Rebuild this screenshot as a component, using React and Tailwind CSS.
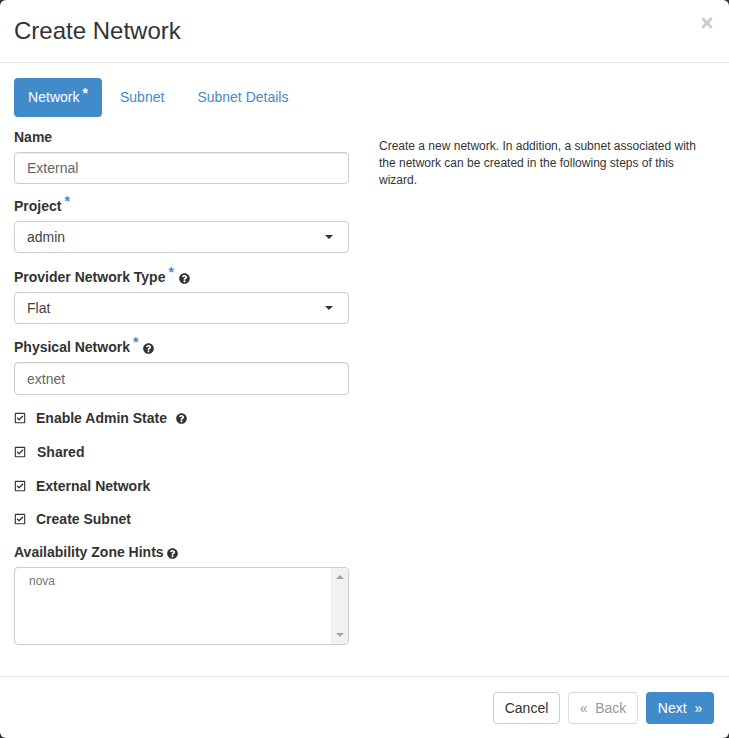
import { FaQuestionCircle, FaRegCheckSquare, FaTimes } from 'react-icons/fa';

function Req({ className = 'text-[#428bca]' }) {
  return <span className={`relative -top-[5px] ml-[3px] text-[14px] font-bold leading-none ${className}`}>*</span>;
}

function Help({ className = 'ml-[5px]' }) {
  return <FaQuestionCircle className={`inline-block text-[11px] text-[#333] ${className}`} />;
}

function Label({ children, className = '' }) {
  return <div className={`h-5 text-[14px] font-bold leading-5 text-[#333] whitespace-nowrap ${className}`}>{children}</div>;
}

function TextBox({ value, className = 'h-8' }) {
  return (
    <input
      readOnly
      value={value}
      className={`mt-[5px] block w-[335px] rounded border border-[#ccc] bg-white px-3 text-[14px] text-[#666] outline-none shadow-[inset_0_1px_1px_rgba(0,0,0,0.075)] ${className}`}
    />
  );
}

function Select({ value }) {
  return (
    <div className="mt-[5px] flex h-8 w-[335px] items-center justify-between rounded border border-[#ccc] bg-white pl-3 pr-[15px] text-[14px] text-[#444]">
      <span>{value}</span>
      <span className="h-0 w-0 border-x-[4px] border-t-[4px] border-x-transparent border-t-[#333]" />
    </div>
  );
}

function Check({ label, help, gap = 'ml-[10px]', className = '' }) {
  return (
    <div className={`flex h-5 items-center ${className}`}>
      <FaRegCheckSquare className="text-[12px] text-[#333]" />
      <span className={`${gap} text-[14px] font-bold text-[#333]`}>{label}</span>
      {help && <Help className="ml-[9px]" />}
    </div>
  );
}

export default function App() {
  return (
    <div className="h-[738px] w-[729px] overflow-hidden bg-[#333] font-['Liberation_Sans',Arial,sans-serif]">
      <div className="flex h-full flex-col rounded-md bg-white">
        <header className="relative h-[63px] shrink-0 border-b border-[#e5e5e5] pl-[14px] pt-[14px]">
          <h1 className="text-[24px] leading-[34px] text-[#333]">Create Network</h1>
          <button className="absolute right-[14px] top-[15px] text-[#ccc]"><FaTimes className="text-[16px]" /></button>
        </header>

        <main className="flex flex-1 px-[14px] pt-[15px]">
          <section className="w-[335px] shrink-0">
            <nav className="flex h-[39px] items-center text-[14px]">
              <span className="flex h-[39px] w-[88px] items-center justify-center rounded bg-[#428bca] font-normal text-white">
                Network<Req className="text-white" />
              </span>
              <span className="ml-[18px] text-[#428bca]">Subnet</span>
              <span className="ml-[33px] text-[#428bca]">Subnet Details</span>
            </nav>

            <Label className="mt-[10px]">Name</Label>
            <TextBox value="External" />

            <Label className="mt-[12px]">Project<Req /></Label>
            <Select value="admin" />

            <Label className="mt-[14px]">Provider Network Type<Req /><Help /></Label>
            <Select value="Flat" />

            <Label className="mt-[13px]">Physical Network<Req /><Help /></Label>
            <TextBox value="extnet" className="h-[33px]" />

            <Check className="mt-[13px]" label="Enable Admin State" help />
            <Check className="mt-[14px]" label="Shared" gap="ml-[11px]" />
            <Check className="mt-[14px]" label="External Network" />
            <Check className="mt-[13px]" label="Create Subnet" />

            <Label className="mt-[13px]">Availability Zone Hints<Help className="ml-[3px]" /></Label>
            <div className="mt-[5px] flex h-[78px] w-[335px] overflow-hidden rounded border border-[#ccc] bg-white">
              <div className="flex-1 pl-[14px] pt-[5px] text-[12px] leading-4 text-[#777]">nova</div>
              <div className="flex w-[17px] flex-col items-center justify-between bg-[#f1f1f1] py-[7px]">
                <span className="h-0 w-0 border-x-[4px] border-b-[4px] border-x-transparent border-b-[#a3a3a3]" />
                <span className="h-0 w-0 border-x-[4px] border-t-[4px] border-x-transparent border-t-[#a3a3a3]" />
              </div>
            </div>
          </section>

          <aside className="ml-[30px] w-[330px] pt-[60px] text-[12px] leading-[17px] text-[#333]">
            Create a new network. In addition, a subnet associated with the network can be created in the following steps of this wizard.
          </aside>
        </main>

        <footer className="flex h-[62px] shrink-0 items-start justify-end gap-2 border-t border-[#e5e5e5] pr-[15px] pt-[15px] text-[14px]">
          <button className="h-8 w-[67px] rounded border border-[#ccc] bg-white text-[#333]">Cancel</button>
          <button className="h-8 w-[70px] rounded border border-[#ddd] bg-white text-[#999]">«&nbsp; Back</button>
          <button className="h-8 w-[68px] rounded bg-[#428bca] text-white">Next&nbsp; »</button>
        </footer>
      </div>
    </div>
  );
}
